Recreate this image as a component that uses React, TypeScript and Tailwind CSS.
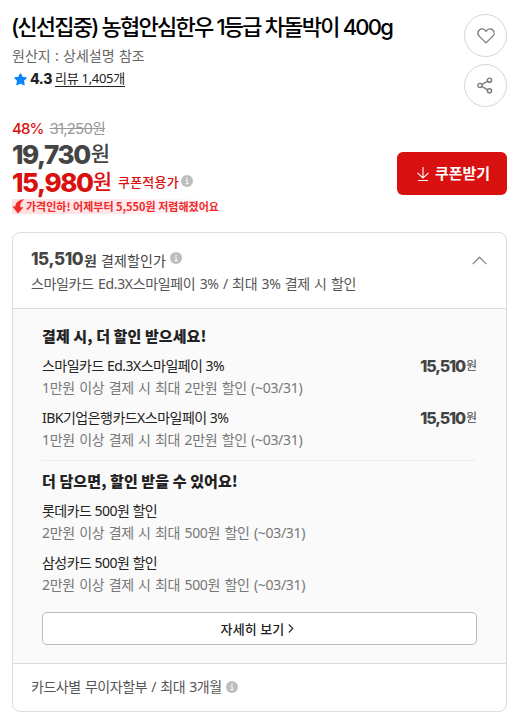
import type { ReactNode } from "react";

interface Benefit {
  name: string;
  desc: string;
  price?: string;
}

const payBenefits: Benefit[] = [
  { name: "스마일카드 Ed.3X스마일페이 3%", desc: "1만원 이상 결제 시 최대 2만원 할인 (~03/31)", price: "15,510" },
  { name: "IBK기업은행카드X스마일페이 3%", desc: "1만원 이상 결제 시 최대 2만원 할인 (~03/31)", price: "15,510" },
];

const cartBenefits: Benefit[] = [
  { name: "롯데카드 500원 할인", desc: "2만원 이상 결제 시 최대 500원 할인 (~03/31)" },
  { name: "삼성카드 500원 할인", desc: "2만원 이상 결제 시 최대 500원 할인 (~03/31)" },
];

function InfoIcon() {
  return (
    <svg className="size-3 shrink-0" viewBox="0 0 12 12">
      <circle cx="6" cy="6" r="6" fill="#bdbdbd" />
      <path d="M4.6 5.2h1.6v3.6M4.4 8.8h3.4" stroke="#fff" strokeWidth="1" fill="none" />
      <rect x="5.4" y="2.5" width="1.3" height="1.3" fill="#fff" />
    </svg>
  );
}

function RoundButton({ label, children }: { label: string; children: ReactNode }) {
  return (
    <button aria-label={label} className="flex size-[43px] items-center justify-center rounded-full border border-[#d5d5d5] bg-white">
      {children}
    </button>
  );
}

function BenefitTitle({ children }: { children: ReactNode }) {
  return (
    <h2 className="h-[31px] font-['Noto_Sans_CJK_KR'] text-[15px] leading-6 font-black tracking-[0.1px] text-[#222]">{children}</h2>
  );
}

function BenefitRow({ name, desc, price }: Benefit) {
  return (
    <li className="flex h-[52px] items-start justify-between">
      <div>
        <p className="h-[22px] text-sm leading-[22px] tracking-[-0.52px] whitespace-nowrap text-[#222]">{name}</p>
        <p className="h-[22px] text-sm leading-[22px] tracking-[-0.31px] [word-spacing:1px] whitespace-nowrap text-[#777]">{desc}</p>
      </div>
      {price && (
        <p className="flex h-[22px] items-center text-[#444]">
          <span className="font-[Inter] text-base font-extrabold tracking-[-1.1px]">{price}</span>
          <span className="ml-px text-xs">원</span>
        </p>
      )}
    </li>
  );
}

export default function App() {
  return (
    <main className="h-[727px] w-[523px] bg-white pl-3 pr-4 pt-3.5 font-['Noto_Sans','Noto_Sans_CJK_KR',sans-serif]">
      <header className="flex h-[104px] justify-between">
        <div>
          <h1 className="-ml-px h-[30px] font-[Inter,'Noto_Sans_CJK_KR',sans-serif] text-[22px] leading-[26px] font-medium tracking-[-1.78px] whitespace-nowrap text-black">
            (신선집중) 농협안심한우 1등급 차돌박이 400g
          </h1>
          <p className="h-6 text-sm leading-6 [word-spacing:0.7px] text-[#666]">원산지 : 상세설명 참조</p>
          <div className="flex h-[22px] items-center pl-0.5">
            <svg className="size-[13px]" viewBox="0 0 12 12" fill="#0a84ff" stroke="#0a84ff" strokeWidth="1.3" strokeLinejoin="round">
              <path d="M6 .9 7.6 4l3.5.5-2.5 2.5.6 3.8L6 9.1l-3.2 1.7.6-3.8L.9 4.5 4.4 4z" />
            </svg>
            <span className="ml-[3px] font-[Inter] text-sm font-extrabold tracking-[-0.3px] text-[#222]">4.3</span>
            <a className="ml-[3px] border-b border-[#222] text-[13px] leading-[15px] tracking-[-0.3px] text-[#222]">리뷰 1,405개</a>
          </div>
        </div>
        <div className="flex flex-col gap-[7px]">
          <RoundButton label="찜하기">
            <svg className="mt-px h-4 w-[18px]" viewBox="0 0 19 17" fill="none" stroke="#777" strokeWidth="1.4" strokeLinejoin="round">
              <path d="M9.5 15.8 2.2 8.6C.4 6.8.5 4 2.2 2.3c1.8-1.8 4.8-1.7 6.5.2l.8.9.8-.9c1.7-1.9 4.7-2 6.5-.2 1.7 1.7 1.8 4.5 0 6.3z" />
            </svg>
          </RoundButton>
          <RoundButton label="공유하기">
            <svg className="mr-px h-[17px] w-4" viewBox="0 0 16 17" fill="none" stroke="#777" strokeWidth="1.4">
              <circle cx="3" cy="8.5" r="2.1" />
              <circle cx="12.5" cy="3.2" r="2.1" />
              <circle cx="12.5" cy="13.8" r="2.1" />
              <path d="m4.9 7.5 5.8-3.3M4.9 9.5l5.800 3.300" />
            </svg>
          </RoundButton>
        </div>
      </header>

      <section className="flex h-[114px] justify-between">
        <div>
          <p className="flex h-[22px] items-center gap-1.5 font-[Inter,'Noto_Sans_CJK_KR',sans-serif] text-[15px] tracking-[-0.8px]">
            <span className="font-medium tracking-[-0.9px] text-[#d91010]">48%</span>
            <del className="text-[#999]">31,250원</del>
          </p>
          <p className="flex h-7 items-center text-[#444]">
            <strong className="font-[Inter] text-[26px] font-extrabold tracking-[-1.4px]">19,730</strong>
            <span className="ml-px text-[21px] font-medium">원</span>
          </p>
          <p className="flex h-7 items-center text-[#d91010]">
            <strong className="font-[Inter] text-[26px] font-extrabold tracking-[-1.4px]">15,980</strong>
            <span className="text-[21px] font-medium">원</span>
            <span className="mr-0.5 ml-1.5 font-['Noto_Sans_CJK_KR'] text-[13px] font-medium tracking-[0.2px]">쿠폰적용가</span>
            <span className="pb-[3px]">
              <InfoIcon />
            </span>
          </p>
          <p className="mt-[3px] flex h-[15px] w-fit items-center bg-linear-to-r from-[#ffe0e1] via-[#ffe9ea] to-white text-[#f02b2b]">
            <svg className="h-[15px] w-[13px]" viewBox="0 0 12 15" fill="#f02b2b">
              <path d="M12 .3C7.500.5 2.800 3 3 7.300L0 7.500 5.500 14.500 11 8.300 7.800 8.200C7.300 5 8.800 2.300 12 .3z" />
            </svg>
            <span className="ml-px font-['Noto_Sans_CJK_KR'] text-[11px] leading-[15px] font-bold whitespace-nowrap">
              가격인하! 어제부터 5,550원 저렴해졌어요
            </span>
          </p>
        </div>
        <button className="mt-[34px] flex h-[43px] w-[110px] items-center justify-center gap-1.5 rounded-md bg-[#d91010] pl-[3px] text-white">
          <svg className="mt-0.5 h-[15px] w-3" viewBox="0 0 12 15" fill="none" stroke="#fff" strokeWidth="1.1">
            <path d="M6 0v11M.5 5.8 6 11l5.5-5.2M1 13.5h10" />
          </svg>
          <span className="font-['Noto_Sans_CJK_KR'] text-[15px] font-bold">쿠폰받기</span>
        </button>
      </section>

      <section className="h-[480px] overflow-hidden rounded-lg border border-[#ddd]">
        <div className="flex h-[75px] justify-between px-[18px] pt-[14px]">
          <div>
            <div className="flex h-[25px] items-center text-[#444]">
              <strong className="font-[Inter] text-[17px] font-extrabold tracking-[-0.4px]">15,510</strong>
              <span className="ml-px font-['Noto_Sans_CJK_KR'] text-sm leading-5 font-bold">원</span>
              <span className="mr-1 ml-1 font-['Noto_Sans_CJK_KR'] text-sm leading-5 tracking-[0.1px]">결제할인가</span>
              <span className="pb-1">
                <InfoIcon />
              </span>
            </div>
            <p className="h-6 text-sm leading-6 tracking-[-0.34px] [word-spacing:1px] whitespace-nowrap text-[#555]">
              스마일카드 Ed.3X스마일페이 3% / 최대 3% 결제 시 할인
            </p>
          </div>
          <svg className="mt-[9px] mr-px h-[9px] w-[15px]" viewBox="0 0 16 9" fill="none" stroke="#80868c" strokeWidth="1.3">
            <path d="m.7 8.3 7.3-7.3 7.3 7.3" />
          </svg>
        </div>
        <div className="h-[356px] border-y border-[#ddd] bg-[#fafafa] px-[29px] pt-[15px]">
          <BenefitTitle>결제 시, 더 할인 받으세요!</BenefitTitle>
          <ul className="mb-2 h-[106px] border-b border-[#eee]">
            {payBenefits.map((b) => (
              <BenefitRow key={b.name} {...b} />
            ))}
          </ul>
          <BenefitTitle>더 담으면, 할인 받을 수 있어요!</BenefitTitle>
          <ul className="h-[112px]">
            {cartBenefits.map((b) => (
              <BenefitRow key={b.name} {...b} />
            ))}
          </ul>
          <button className="flex h-[33px] w-full items-center justify-center gap-1 rounded-[5px] border border-[#bbb] bg-white pr-1 text-[#222]">
            <span className="font-['Noto_Sans_CJK_KR'] text-[13px] font-medium tracking-[0.2px]">자세히 보기</span>
            <svg className="h-[9px] w-[6px]" viewBox="0 0 6 9" fill="none" stroke="#222" strokeWidth="1.1">
              <path d="m.8.5 4 4-4 4" />
            </svg>
          </button>
        </div>
        <div className="flex h-[46px] items-center gap-1 px-[18px]">
          <span className="text-sm tracking-[-0.45px] [word-spacing:1px] text-[#555]">카드사별 무이자할부 / 최대 3개월</span>
          <InfoIcon />
        </div>
      </section>
    </main>
  );
}
